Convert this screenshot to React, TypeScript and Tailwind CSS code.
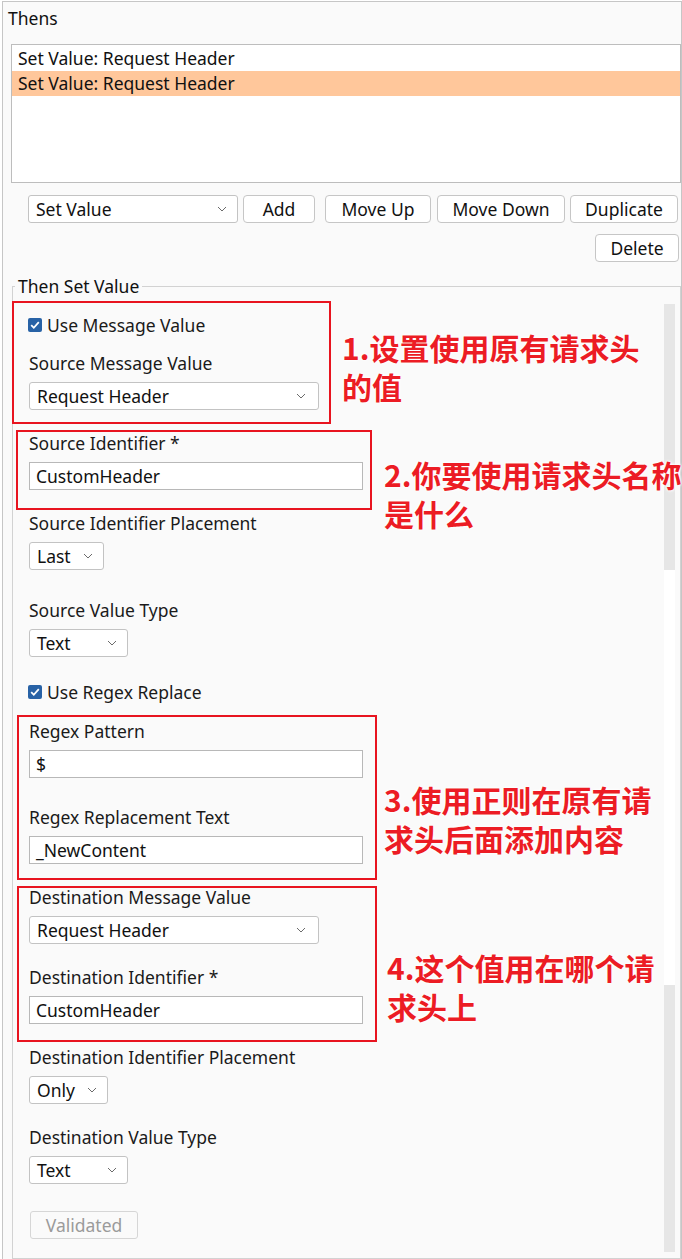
import React from "react";

const font = "font-['Noto_Sans','Liberation_Sans',sans-serif]";

const Chevron = () => (
  <svg width="10" height="6" viewBox="0 0 10 6" className="shrink-0">
    <path d="M1 1 L5 5 L9 1" fill="none" stroke="#6b6b6b" strokeWidth="1" />
  </svg>
);

const Select = ({ value, w, pr = "pr-[12px]", mt }: { value: string; w: string; pr?: string; mt?: string }) => (
  <div className={`${w} ${mt ?? ""} ${pr} h-[28px] flex items-center justify-between pl-[7px] bg-white border border-[#c3c3c3] rounded-[3px] text-[#111]`}>
    <span>{value}</span>
    <Chevron />
  </div>
);

const Input = ({ value, mt }: { value: string; mt?: string }) => (
  <div className={`${mt ?? ""} w-[334px] h-[28px] flex items-center pl-[6px] bg-white border border-[#b8b8b8] text-[#111]`}>
    {value}
  </div>
);

const Label = ({ text, mt }: { text: string; mt: string }) => (
  <div className={`${mt} h-[22px] leading-[22px] text-[#1a1a1a]`}>{text}</div>
);

const Check = ({ text, mt }: { text: string; mt: string }) => (
  <div className={`${mt} h-[22px] flex items-center gap-[5px] -ml-[1px] text-[#1a1a1a]`}>
    <svg width="14" height="14" viewBox="0 0 14 14">
      <rect x="0" y="0" width="14" height="14" rx="2" fill="#2862a6" />
      <path d="M3.2 7.2 L5.8 9.8 L10.8 4.2" fill="none" stroke="#fff" strokeWidth="1.8" />
    </svg>
    <span>{text}</span>
  </div>
);

const Btn = ({ text, w, ml }: { text: string; w: string; ml?: string }) => (
  <div className={`${w} ${ml ?? ""} h-[28px] flex items-center justify-center bg-white border border-[#c6c6c6] rounded-[4px] text-[#111]`}>
    {text}
  </div>
);

const Note = ({ lines, left, top }: { lines: string[]; left: string; top: string }) => (
  <div
    className={`absolute ${left} ${top} z-20 font-['Noto_Sans_CJK_SC',sans-serif] font-bold text-[30px] leading-[39px] text-[#ec1c24] whitespace-nowrap [text-shadow:0_0_2px_#fff,0_0_3px_#fff,0_0_4px_#fff]`}
  >
    {lines.map((l) => (
      <div key={l}>{l}</div>
    ))}
  </div>
);

const RedBox = ({ cls }: { cls: string }) => (
  <div className={`absolute z-10 border-2 border-[#e8141f] pointer-events-none ${cls}`} />
);

export default function App() {
  return (
    <div className={`relative w-[682px] h-[1259px] bg-white pt-[1px] pl-[2px] overflow-hidden text-[17.5px] ${font}`}>
      <div className="w-[680px] h-[1258px] bg-[#fafafa] border-t border-l border-r border-[#c6c6c6]">
        <div className="pl-[5px] pt-[5px] h-[27px] leading-[22px] text-[#111]">Thens</div>

        {/* list */}
        <div className="ml-[8px] mt-[15px] w-[670px] h-[139px] bg-white border border-[#bdbdbd] pt-[1px]">
          <div className="h-[25px] leading-[25px] pl-[6px] text-[#111]">Set Value: Request Header</div>
          <div className="h-[25px] leading-[25px] pl-[6px] bg-[#ffc79b] text-[#111]">Set Value: Request Header</div>
        </div>

        {/* toolbar */}
        <div className="flex ml-[25px] mt-[12px]">
          <Select value="Set Value" w="w-[210px]" pr="pr-[10px]" />
          <Btn text="Add" w="w-[72px]" ml="ml-[5px]" />
          <Btn text="Move Up" w="w-[106px]" ml="ml-[10px]" />
          <Btn text="Move Down" w="w-[128px]" ml="ml-[6px]" />
          <Btn text="Duplicate" w="w-[108px]" ml="ml-[5px]" />
        </div>
        <div className="flex justify-end pr-[2px] mt-[11px]">
          <Btn text="Delete" w="w-[84px]" />
        </div>

        {/* Then Set Value */}
        <fieldset className="ml-[9px] mt-[13px] w-[669px] h-[984px] border border-[#d2d2d2] pr-[5px]">
          <legend className="ml-[2px] px-[3px] leading-[22px] text-[#111]">Then Set Value</legend>
          <div className="flex">
            <div className="flex-1 flex flex-col items-start pl-[16px]">
              <Check text="Use Message Value" mt="mt-[17px]" />
              <Label text="Source Message Value" mt="mt-[16px]" />
              <Select value="Request Header" w="w-[290px]" mt="mt-[8px]" />
              <Label text="Source Identifier *" mt="mt-[22px]" />
              <Input value="CustomHeader" mt="mt-[8px]" />
              <Label text="Source Identifier Placement" mt="mt-[22px]" />
              <Select value="Last" w="w-[75px]" pr="pr-[10px]" mt="mt-[8px]" />
              <Label text="Source Value Type" mt="mt-[29px]" />
              <Select value="Text" w="w-[99px]" pr="pr-[10px]" mt="mt-[8px]" />
              <Check text="Use Regex Replace" mt="mt-[24px]" />
              <Label text="Regex Pattern" mt="mt-[17px]" />
              <Input value="$" mt="mt-[8px]" />
              <Label text="Regex Replacement Text" mt="mt-[28px]" />
              <Input value="_NewContent" mt="mt-[8px]" />
              <Label text="Destination Message Value" mt="mt-[22px]" />
              <Select value="Request Header" w="w-[290px]" mt="mt-[8px]" />
              <Label text="Destination Identifier *" mt="mt-[22px]" />
              <Input value="CustomHeader" mt="mt-[8px]" />
              <Label text="Destination Identifier Placement" mt="mt-[22px]" />
              <Select value="Only" w="w-[79px]" pr="pr-[10px]" mt="mt-[8px]" />
              <Label text="Destination Value Type" mt="mt-[22px]" />
              <Select value="Text" w="w-[99px]" pr="pr-[10px]" mt="mt-[8px]" />
              <div className="ml-[1px] mt-[27px] w-[108px] h-[28px] flex items-center justify-center border border-[#d6d6d6] rounded-[3px] text-[#9b9b9b]">
                Validated
              </div>
            </div>
            {/* scrollbar */}
            <div className="mt-[7px] w-[11px] h-[948px] flex flex-col">
              <div className="h-[266px] bg-[#e6e6e6]" />
              <div className="h-[415px] bg-white" />
              <div className="h-[267px] bg-[#e6e6e6]" />
            </div>
          </div>
        </fieldset>
      </div>

      <RedBox cls="left-[12px] top-[301px] w-[319px] h-[123px]" />
      <RedBox cls="left-[16px] top-[430px] w-[356px] h-[80px]" />
      <RedBox cls="left-[17px] top-[715px] w-[360px] h-[165px]" />
      <RedBox cls="left-[17px] top-[886px] w-[360px] h-[156px]" />

      <Note lines={["1.设置使用原有请求头", "的值"]} left="left-[342px]" top="top-[328px]" />
      <Note lines={["2.你要使用请求头名称", "是什么"]} left="left-[384px]" top="top-[455px]" />
      <Note lines={["3.使用正则在原有请", "求头后面添加内容"]} left="left-[384px]" top="top-[780px]" />
      <Note lines={["4.这个值用在哪个请", "求头上"]} left="left-[387px]" top="top-[948px]" />
    </div>
  );
}
